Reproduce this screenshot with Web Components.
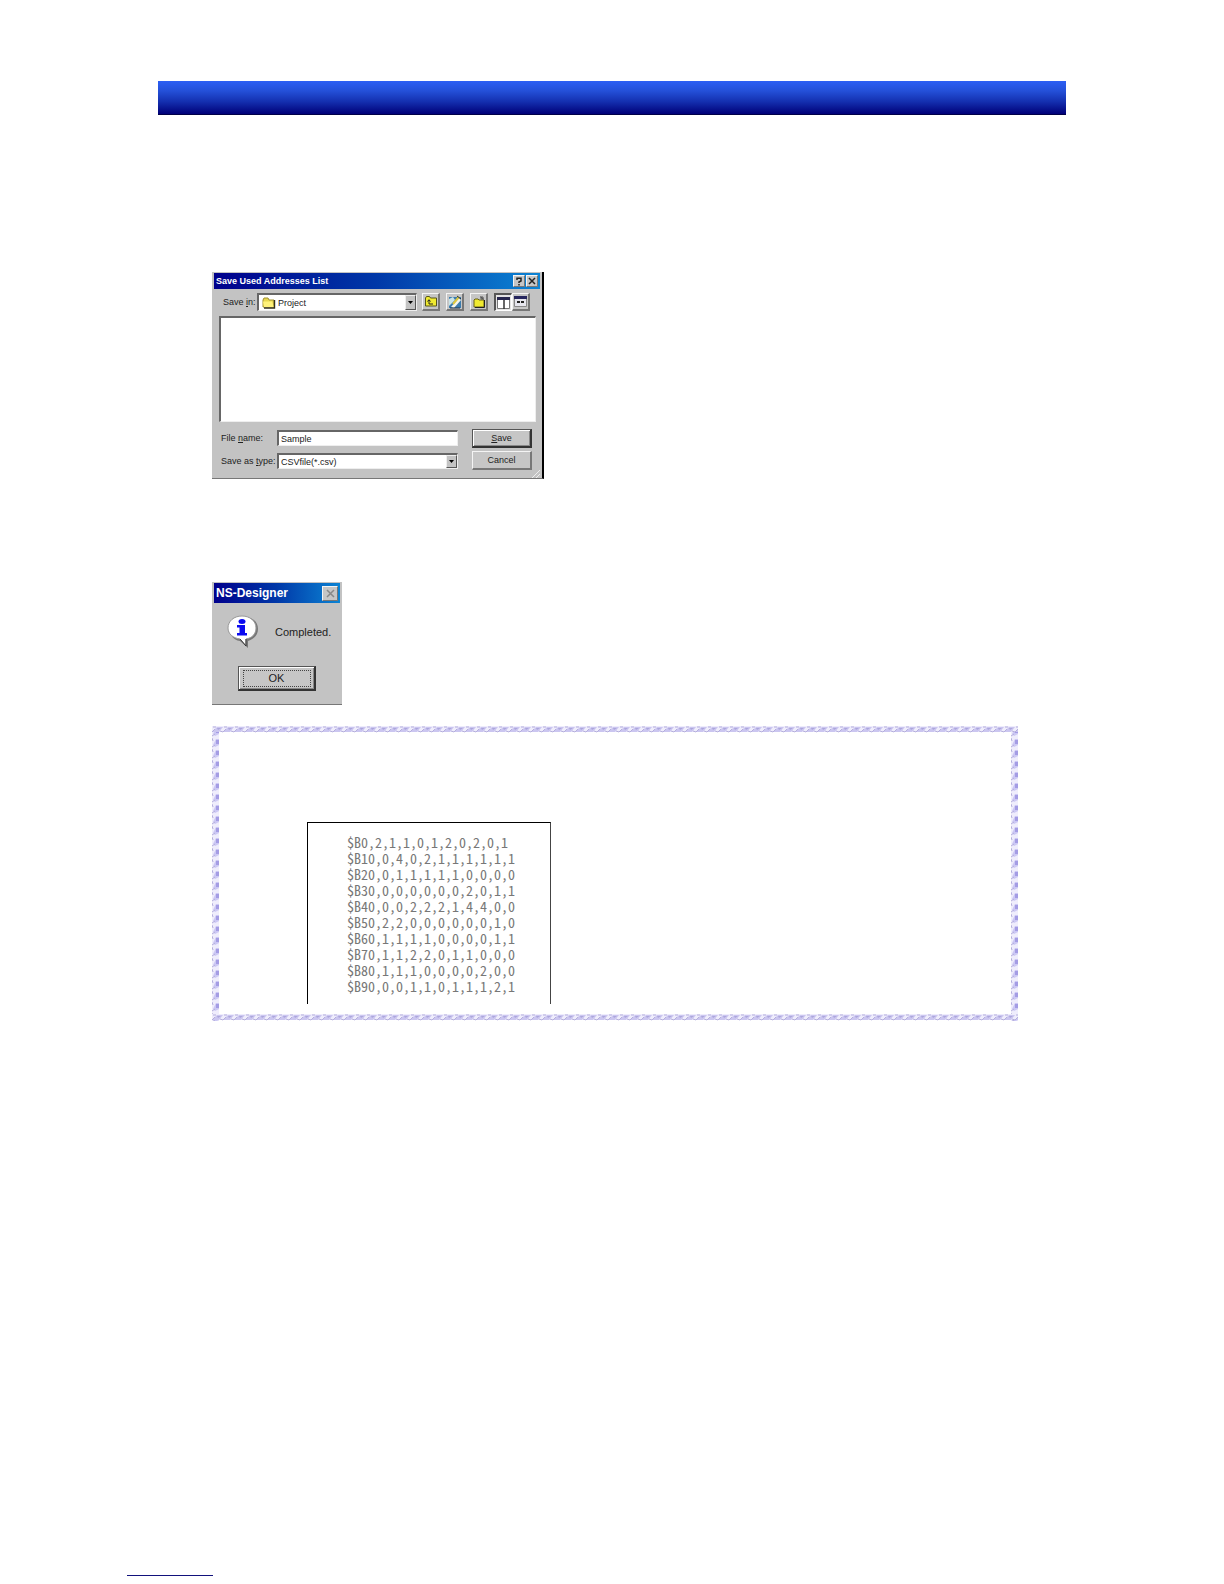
<!DOCTYPE html>
<html lang="en">
<head>
<meta charset="utf-8">
<title>Save Used Addresses List</title>
<style>
body {
    margin: 0;
    background: #fff;
    font-family: "Liberation Sans", Arial, sans-serif;
}
</style>
</head>
<body>
<manual-page>
    <page-banner slot="banner"></page-banner>
    <save-dialog></save-dialog>
    <message-dialog caption="NS-Designer">Completed.</message-dialog>
    <note-box>
        <csv-listing>$B0,2,1,1,0,1,2,0,2,0,1
$B10,0,4,0,2,1,1,1,1,1,1
$B20,0,1,1,1,1,1,0,0,0,0
$B30,0,0,0,0,0,0,2,0,1,1
$B40,0,0,2,2,2,1,4,4,0,0
$B50,2,2,0,0,0,0,0,0,1,0
$B60,1,1,1,1,0,0,0,0,1,1
$B70,1,1,2,2,0,1,1,0,0,0
$B80,1,1,1,0,0,0,0,2,0,0
$B90,0,0,1,1,0,1,1,1,2,1</csv-listing>
    </note-box>
</manual-page>

<script>
function define(name, html, setup) {
    const template = document.createElement('template');
    template.innerHTML = html;
    customElements.define(name, class extends HTMLElement {
        constructor() {
            super();
            this.attachShadow({ mode: "open" }).appendChild(template.content.cloneNode(true));
            if (setup) setup(this, this.shadowRoot);
        }
    });
}

// page sheet: banner, content column, footnote rule
define('manual-page', `
<style>
:host {
    display: flex;
    flex-direction: column;
    box-sizing: border-box;
    min-height: 100vh;
    padding: 81px 158px 8px;
}
main {
    flex: 1;
    display: flex;
    flex-direction: column;
    align-items: flex-start;
    margin: 157px 48px 0 54px;
}
::slotted(message-dialog) { margin-top: 103px; }
::slotted(note-box) { margin-top: 21px; align-self: stretch; }
hr {
    width: 86px;
    height: 1px;
    margin: 0 0 0 -31px;
    border: 0;
    background: #12127c;
}
</style>
<slot name="banner"></slot>
<main><slot></slot></main>
<hr>`);

define('page-banner', `
<style>
:host {
    display: block;
    height: 33px;
    border-bottom: 1px solid #000048;
    background: linear-gradient(#2c5ff4, #2450d8 30%, #1430b0 62%, #000078);
}
</style>`);

// grey window with a gradient title bar
define('win-frame', `
<style>
:host {
    display: block;
    box-sizing: border-box;
    padding: 1px 2px 0;
    background: #c3c3c3;
    color: #222;
}
header {
    display: flex;
    align-items: center;
    gap: 1px;
    height: var(--bar, 16px);
    padding: 0 2px;
    background: linear-gradient(90deg, #00008c, #0038a8 50%, #0c84d4);
    color: #fff;
    font-weight: bold;
    font-size: var(--caption, 9px);
}
h2 { flex: 1; margin: 0; font-size: inherit; white-space: nowrap; }
</style>
<header><h2><slot name="title"></slot></h2><slot name="buttons"></slot></header>
<slot></slot>`);

define('win-button', `
<style>
:host { display: block; }
button {
    display: flex;
    align-items: center;
    justify-content: center;
    box-sizing: border-box;
    width: 100%;
    height: 100%;
    padding: 0;
    border: solid;
    border-width: 1px 2px 2px 1px;
    border-color: #f4f4f4 #777 #777 #f4f4f4;
    background: #c6c6c6;
    color: inherit;
    font: inherit;
}
:host([default]) button {
    border-color: #555 #333 #333 #555;
    box-shadow: inset 1px 1px #fff, inset -1px -1px #888;
}
:host([pressed]) button {
    border-width: 2px 1px 1px 2px;
    border-color: #555 #fff #fff #555;
    background: #e4e4e4;
}
:host([small]) button { border-width: 1px; }
</style>
<button type="button"><slot></slot></button>`, (host, root) => {
    const label = host.getAttribute("label");
    if (label) root.querySelector("button").setAttribute("aria-label", label);
});

define('save-dialog', `
<style>
:host {
    display: block;
    width: 332px;
    max-width: 100%;
    font-size: 9px;
    line-height: 12px;
}
win-frame { border-right: 2px solid #000; border-bottom: 1px solid #777; }
.close { width: 12px; height: 12px; }
.look, .fields, .field { display: flex; align-items: center; }
.look { gap: 5px; padding: 4px 10px 5px 9px; }
.look label { width: 29px; white-space: nowrap; }
.box {
    display: flex;
    box-sizing: border-box;
    flex: 1;
    min-width: 0;
    border: solid;
    border-width: 2px 1px 1px 2px;
    border-color: #666 #eee #eee #666;
    background: #fff;
}
.look .box { height: 18px; align-items: center; }
.look .box > svg { margin-left: 3px; }
select, input {
    appearance: none;
    flex: 1;
    min-width: 0;
    box-sizing: border-box;
    height: 13px;
    margin: 0;
    padding: 0 2px;
    border: 0;
    background: none;
    color: #222;
    font: inherit;
}
.arrow {
    display: flex;
    align-items: center;
    justify-content: center;
    box-sizing: border-box;
    width: 11px;
    align-self: stretch;
    border: 1px solid;
    border-color: #eee #555 #555 #eee;
    background: #c3c3c3;
    pointer-events: none;
}
.tools { display: flex; gap: 6px; }
.tools win-button { width: 18px; height: 18px; }
.views { display: flex; }
.list {
    height: 106px;
    box-sizing: border-box;
    margin: 0 4px 0 5px;
    border: solid;
    border-width: 2px 1px 1px 2px;
    border-color: #666 #eee #eee #666;
    background: #fff;
}
.fields { gap: 14px; padding: 7px 8px 8px 7px; }
.column { display: flex; flex-direction: column; gap: 7px; flex: 1; }
.field label { width: 56px; white-space: nowrap; }
.field .box { height: 16px; }
.actions { display: flex; flex-direction: column; gap: 3px; width: 60px; }
.actions win-button { height: 19px; }
.wrap { position: relative; }
.grip { position: absolute; right: 0; bottom: 0; }
</style>
<win-frame>
    <span slot="title">Save Used Addresses List</span>
    <win-button small slot="buttons" class="close" label="Help"><svg width="8" height="9" viewBox="0 0 8 9" fill="none" stroke="#222" stroke-width="1.5"><path d="M2 3V1.2h4V4L4 5v1M4 7v1.5"/></svg></win-button>
    <win-button small slot="buttons" class="close" label="Close"><svg width="8" height="8" viewBox="0 0 8 8" stroke="#222" stroke-width="1.5"><path d="M1 1l6 6M7 1L1 7"/></svg></win-button>
    <div class="wrap">
        <div class="look">
            <label for="dir">Save <u>i</u>n:</label>
            <span class="box">
                <svg width="14" height="12" viewBox="0 0 14 12"><path d="M1 3l1-2h4l1 2h5v7H1z" fill="#e8d850" stroke="#a09030"/><path d="M1 4.500h9l2 5.500H2z" fill="#fff27a"/><path d="M12.500 3v8H2" fill="none" stroke="#33301a" stroke-width="1.400"/></svg>
                <select id="dir"><option>Project</option></select>
                <span class="arrow"><svg width="5" height="3"><path d="M0 0h5L2.500 3z"/></svg></span>
            </span>
            <div class="tools">
                <win-button label="Up one level"><svg width="14" height="13" viewBox="0 0 14 13"><path d="M1.500 3l1-1.500h3l1 1.500h6v8h-11z" fill="#f0ea30" stroke="#55551a"/><path d="M5 9V5M3.500 6.500L5 4.700l1.500 1.800M5 9h4" fill="none" stroke="#222"/></svg></win-button>
                <win-button label="Desktop"><svg width="14" height="14" viewBox="0 0 14 14"><rect x="1" y="2" width="12" height="11" fill="#3c7cae"/><path d="M1 4l4-2 2 3-6 6z" fill="#c9e4e8"/><path d="M3 12l8-9 2 2-7 8z" fill="#f5f5ec"/><path d="M5 9l6-7" stroke="#e0c83c" stroke-width="2"/><path d="M9 1l4 3M2 13h10" stroke="#234" fill="none"/></svg></win-button>
                <win-button label="Create new folder"><svg width="14" height="14" viewBox="0 0 14 14"><path d="M2 5l1-1h3l1 1h5v7H2z" fill="#f0ea30" stroke="#66601a"/><path d="M12.500 5v7.500H3" fill="none" stroke="#222"/><path d="M10 1v4M8 3h4M8 1.500l4 3" stroke="#555"/></svg></win-button>
                <div class="views">
                    <win-button pressed label="List"><svg width="13" height="12" viewBox="0 0 13 12"><path d="M.5.500h12v11H.5z" fill="#fff" stroke="#777"/><path d="M0 0h13v3H0z" fill="#26264e"/><path d="M7 3v9" stroke="#333" stroke-width="1.500"/></svg></win-button>
                    <win-button label="Details"><svg width="13" height="12" viewBox="0 0 13 12"><path d="M.5.500h12v10H.5z" fill="#e6e6ee" stroke="#888"/><path d="M0 0h13v3H0z" fill="#26265e"/><path d="M3 6h3M7 6h3" stroke="#222" stroke-width="2"/></svg></win-button>
                </div>
            </div>
        </div>
        <div class="list"></div>
        <div class="fields">
            <div class="column">
                <div class="field">
                    <label for="name">File <u>n</u>ame:</label>
                    <span class="box"><input id="name" type="text" value="Sample"></span>
                </div>
                <div class="field">
                    <label for="type">Save as <u>t</u>ype:</label>
                    <span class="box">
                        <select id="type"><option>CSVfile(*.csv)</option></select>
                        <span class="arrow"><svg width="5" height="3"><path d="M0 0h5L2.500 3z"/></svg></span>
                    </span>
                </div>
            </div>
            <div class="actions">
                <win-button default><span><u>S</u>ave</span></win-button>
                <win-button>Cancel</win-button>
            </div>
        </div>
        <svg class="grip" width="8" height="8" stroke="#eee"><path d="M0 8L8 0M4 8l4-4"/></svg>
    </div>
</win-frame>`);

define('message-dialog', `
<style>
:host {
    display: block;
    width: 130px;
    max-width: 100%;
    font-size: 11px;
    line-height: 14px;
}
win-frame {
    --bar: 20px;
    --caption: 12px;
    border-bottom: 1px solid #777;
}
.close { width: 16px; height: 15px; color: #888; }
.body { display: flex; align-items: center; gap: 16px; padding: 12px 12px 0 13px; white-space: nowrap; }
.body svg { flex: none; }
.ok { box-sizing: border-box; width: 78px; height: 25px; margin: 17px auto 13px 24px; }
.focus {
    box-sizing: border-box;
    width: 68px;
    height: 17px;
    border: 1px dotted #444;
}
</style>
<win-frame>
    <span slot="title"></span>
    <win-button small slot="buttons" class="close" label="Close"><svg width="9" height="9" viewBox="0 0 9 9" stroke="currentColor" stroke-width="1.500"><path d="M1 1l7 7M8 1L1 8"/></svg></win-button>
    <div class="body">
        <svg width="32" height="34" viewBox="0 0 32 34">
            <path d="M17 2c9 0 14 5 14 12 0 6-4 10-10 12v7l-8-7C6 25 3 20 3 14 3 7 9 2 17 2z" fill="#777"/>
            <path d="M15 1c8 0 14 5 14 12 0 6-4 10-10 11v7l-6-7C6 23 1 19 1 13 1 6 7 1 15 1z" fill="#fff" stroke="#999"/>
            <path d="M19 24v7l-6-7" fill="none" stroke="#333"/>
            <ellipse cx="15" cy="6.500" rx="3.500" ry="2.500" fill="#0a0af0"/>
            <path d="M10 10h8v8h2v2.500h-10v-2.500h2.500v-5.500h-2.500z" fill="#0a0af0"/>
        </svg>
        <span><slot></slot></span>
    </div>
    <win-button default class="ok"><span class="focus">OK</span></win-button>
</win-frame>`, (host, root) => {
    root.querySelector("[slot=title]").textContent = host.getAttribute("caption");
});

// braided lilac frame, one tile repeated along each side
const braid = (w, h, shapes) =>
    `url("data:image/svg+xml,${encodeURIComponent(`<svg xmlns="http://www.w3.org/2000/svg" width="${w}" height="${h}">${shapes}</svg>`)}")`;
const across = braid(11, 7, '<path d="M0 0h11v6H0z" fill="#efedfc"/><path d="M0 6L5 1h6L7 6z" fill="#cbc6f0"/><path d="M5 2h4L6 4z" fill="#aca6dc"/><path d="M0 6l3-3M8 5l3 1M1 1h3" stroke="#b4aedc" fill="none"/>');
const down = braid(7, 11, '<path d="M0 0h7v11H0z" fill="#efedfc"/><path d="M1 8l3-6h3v6l-4 2z" fill="#ccc8f4"/><path d="M4 3h3v4H4z" fill="#a49ce4"/><path d="M0 10l3-2M0 1l1 3" stroke="#b4aedc" fill="none"/>');

define('note-box', `
<style>
:host {
    display: block;
    box-sizing: border-box;
    padding: 96px 95px 17px;
    background:
        ${across} 0 0 repeat-x,
        ${across} 0 100% repeat-x,
        ${down} 0 0 repeat-y,
        ${down} 100% 0 repeat-y;
}
</style>
<slot></slot>`);

define('csv-listing', `
<style>
:host {
    display: block;
    box-sizing: border-box;
    width: 244px;
    max-width: 100%;
    padding: 11px 0 10px 39px;
    border: 1px solid #000;
    border-right-color: #444;
    border-bottom: 0;
    color: #777;
}
pre {
    margin: 0;
    font-family: "Noto Sans CJK JP", monospace;
    font-size: 14px;
    line-height: 16px;
    font-feature-settings: "hwid";
}
</style>
<pre><slot></slot></pre>`);
</script>
</body>
</html>
